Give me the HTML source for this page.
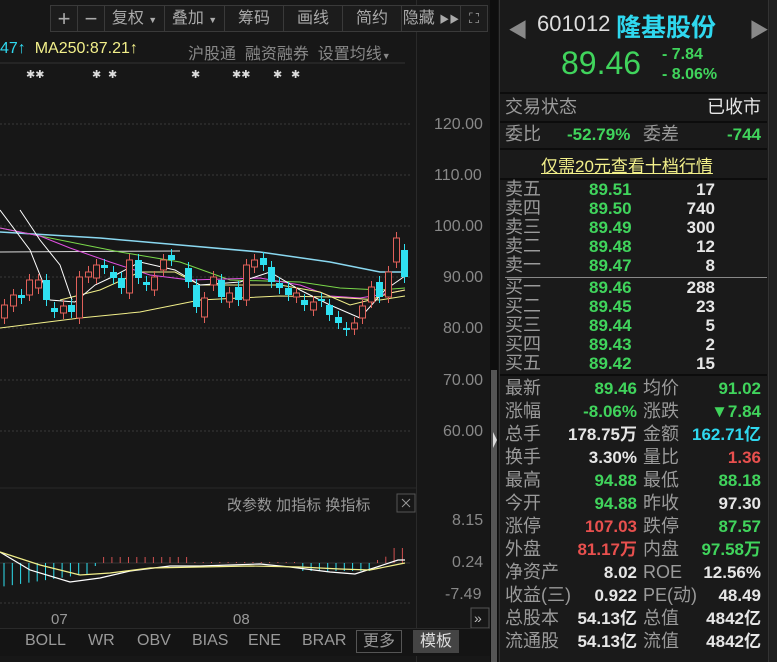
<!DOCTYPE html>
<html><head><meta charset="utf-8">
<style>
*{margin:0;padding:0;box-sizing:border-box}
body{width:777px;height:662px;background:#171717;overflow:hidden;position:relative;font-family:"Liberation Sans","Noto Sans CJK SC",sans-serif;color:#bbb}
.a{position:absolute;white-space:nowrap}
.tb{position:absolute;top:5px;height:27px;border:1px solid #3a3a3a;background:#1c1c1c;color:#aaa;font-size:16px;line-height:25px;text-align:center}
.g{color:#40d45c}.r{color:#e8504e}.w{color:#e6e6e6}.c{color:#2fd8ef}.y{color:#f2ef8a}
.lbl{color:#9a9a9a;font-size:18px}
.row{position:absolute;left:505px;width:260px;height:23px;font-size:17px;line-height:23px}
.row span{position:absolute}
.ob{position:absolute;left:505px;width:210px;height:19px;font-size:17px;line-height:19px;font-weight:bold}
.ob span{position:absolute}
.ax{position:absolute;font-size:16px;color:#888}
</style></head><body>
<svg class="a" style="left:0;top:0" width="500" height="662">
<rect x="416" y="0" width="1" height="662" fill="#2a2a2a"/>
<rect x="490" y="0" width="8" height="662" fill="#0e0e0e"/>
<rect x="491" y="370" width="6" height="292" fill="#555"/>
<polygon points="493,432 497,440 493,448" fill="#ddd"/>
<g stroke="#3a3a3a" stroke-dasharray="2,2" stroke-width="1">
<line x1="0" y1="124" x2="410" y2="124"/><line x1="0" y1="175" x2="410" y2="175"/><line x1="0" y1="226" x2="410" y2="226"/><line x1="0" y1="277" x2="410" y2="277"/><line x1="0" y1="328" x2="410" y2="328"/><line x1="0" y1="380" x2="410" y2="380"/><line x1="0" y1="431" x2="410" y2="431"/>
<line x1="0" y1="603" x2="410" y2="603"/>
</g>
<line x1="0" y1="488" x2="416" y2="488" stroke="#2a2a2a"/>
<line x1="0" y1="63" x2="405" y2="63" stroke="#333"/>
<polyline fill="none" stroke="#8ad8f0" stroke-width="1.5" points="0,232 100,238 180,245 260,252 330,262 380,272 405,272"/>
<polyline fill="none" stroke="#dcdcdc" stroke-width="1" points="0,252 180,251"/>
<polyline fill="none" stroke="#7ad84a" stroke-width="1" points="0,228 60,240 120,252 180,262 230,280 300,282 340,288 380,290 405,288"/>
<polyline fill="none" stroke="#e050e0" stroke-width="1" points="0,228 40,236 70,248 110,262 150,275 190,280 260,278 300,285 330,296 360,298 390,293 405,290"/>
<polyline fill="none" stroke="#f2ef8a" stroke-width="1" points="0,328 80,318 140,312 200,300 280,296 330,297 380,300 405,296"/>
<polyline fill="none" stroke="#f2ef8a" stroke-width="1" points="60,300 100,290 140,272 175,272 200,285 240,285 280,285 320,292 350,305 370,300 390,293 405,290"/>
<polyline fill="none" stroke="#fff" stroke-width="1" points="0,210 30,250 50,300 75,302 95,285 110,278 140,262 175,270 200,285 240,282 270,272 300,290 330,305 360,318 385,290 405,276"/>
<polyline fill="none" stroke="#fff" stroke-width="1" points="20,210 40,240 60,265 72,300"/>
<g id="cd"></g>
<line x1="0" y1="563" x2="410" y2="563" stroke="#333"/>
<g id="md"></g>
<polyline fill="none" stroke="#fff" stroke-width="1.2" points="0,552 30,570 70,582 100,578 130,571 170,566 200,566 230,565 260,564 290,567 330,572 355,574 380,566 398,560 405,560"/>
<polyline fill="none" stroke="#f2ef8a" stroke-width="1.2" points="0,552 40,565 80,575 110,573 150,568 200,567 250,566 300,567 340,569 370,570 395,565 405,563"/>
<rect x="471" y="608" width="18" height="20" fill="none" stroke="#555"/>
<text x="474" y="623" fill="#bbb" font-size="14">»</text>
<rect x="397" y="494" width="18" height="18" fill="none" stroke="#555"/>
<path d="M402 499 L410 507 M410 499 L402 507" stroke="#999"/>
<g fill="#ddd" font-size="11"><text x="26" y="78">✱✱</text><text x="92" y="78">✱</text><text x="108" y="78">✱</text><text x="191" y="78">✱</text><text x="232" y="78">✱✱</text><text x="273" y="78">✱</text><text x="291" y="78">✱</text></g>
</svg>
<div class="ax" style="left:434px;top:116px">120.00</div>
<div class="ax" style="left:434px;top:167px">110.00</div>
<div class="ax" style="left:434px;top:218px">100.00</div>
<div class="ax" style="left:443px;top:269px">90.00</div>
<div class="ax" style="left:443px;top:320px">80.00</div>
<div class="ax" style="left:443px;top:372px">70.00</div>
<div class="ax" style="left:443px;top:423px">60.00</div>
<div class="ax" style="left:452px;top:512px">8.15</div>
<div class="ax" style="left:452px;top:554px">0.24</div>
<div class="ax" style="left:445px;top:586px">-7.49</div>
<div class="a" style="left:227px;top:494px;font-size:15px;color:#999">改参数&nbsp;加指标&nbsp;换指标</div>
<div class="a" style="left:51px;top:611px;font-size:15px;color:#999">07</div>
<div class="a" style="left:233px;top:611px;font-size:15px;color:#999">08</div>
<div class="tb" style="left:50px;width:28px;font-size:22px">+</div>
<div class="tb" style="left:77px;width:28px;font-size:22px">−</div>
<div class="tb" style="left:104px;width:61px">复权 <span style="font-size:9px">▼</span></div>
<div class="tb" style="left:164px;width:61px">叠加 <span style="font-size:9px">▼</span></div>
<div class="tb" style="left:224px;width:60px">筹码</div>
<div class="tb" style="left:283px;width:60px">画线</div>
<div class="tb" style="left:342px;width:60px">简约</div>
<div class="tb" style="left:401px;width:60px">隐藏 <span style="font-size:10px">▶▶</span></div>
<div class="tb" style="left:460px;width:28px;font-size:14px">⛶</div>
<div class="a" style="left:0;top:40px;font-size:16px"><span class="c">47↑</span>&nbsp;&nbsp;<span class="y">MA250:87.21↑</span></div>
<div class="a" style="left:188px;top:40px;font-size:16px;color:#888">沪股通&nbsp;&nbsp;融资融券&nbsp;&nbsp;设置均线<span style="font-size:9px">▼</span></div>
<div class="a" style="left:0;top:628px;width:490px;height:28px;background:#141414;border-top:1px solid #2a2a2a"></div>
<div class="a" style="left:25px;top:632px;font-size:16px;color:#999">BOLL</div>
<div class="a" style="left:88px;top:632px;font-size:16px;color:#999">WR</div>
<div class="a" style="left:137px;top:632px;font-size:16px;color:#999">OBV</div>
<div class="a" style="left:192px;top:632px;font-size:16px;color:#999">BIAS</div>
<div class="a" style="left:248px;top:632px;font-size:16px;color:#999">ENE</div>
<div class="a" style="left:302px;top:632px;font-size:16px;color:#999">BRAR</div>
<div class="a" style="left:356px;top:630px;width:46px;height:23px;border:1px solid #555;font-size:16px;color:#999;text-align:center;line-height:21px">更多</div>
<div class="a" style="left:413px;top:630px;width:46px;height:23px;background:#444;font-size:16px;color:#ddd;text-align:center;line-height:23px">模板</div>
<div class="a" style="left:499px;top:0;width:269px;height:662px;background:#1a1a1a;border-left:1px solid #333"></div>
<div class="a" style="left:768px;top:0;width:9px;height:662px;background:#202020;border-left:1px solid #333"></div>
<div class="a" style="left:508px;top:14px;font-size:20px;color:#888">◀</div>
<div class="a" style="left:749px;top:14px;font-size:20px;color:#888">▶</div>
<div class="a" style="left:537px;top:11px;font-size:22px;color:#ddd">601012</div>
<div class="a c" style="left:616px;top:8px;font-size:25px;font-weight:bold">隆基股份</div>
<div class="a g" style="left:561px;top:45px;font-size:32px">89.46</div>
<div class="a g" style="left:662px;top:46px;font-size:16px;font-weight:bold">- 7.84</div>
<div class="a g" style="left:662px;top:66px;font-size:16px;font-weight:bold">- 8.06%</div>
<div class="a" style="left:500px;top:92px;width:267px;border-top:2px solid #0c0c0c"></div>
<div class="row" style="top:96px"><span class="lbl" style="left:0">交易状态</span><span class="w" style="right:4px;font-size:18px">已收市</span></div>
<div class="a" style="left:500px;top:121px;width:267px;border-top:2px solid #0c0c0c"></div>
<div class="row" style="top:123px"><span class="lbl" style="left:0">委比</span><span class="g" style="left:62px;font-weight:bold">-52.79%</span><span class="lbl" style="left:138px">委差</span><span class="g" style="right:4px;font-weight:bold">-744</span></div>
<div class="a" style="left:500px;top:148px;width:267px;border-top:2px solid #0c0c0c"></div>
<div class="a y" style="left:541px;top:152px;font-size:17px;text-decoration:underline">仅需20元查看十档行情</div>
<div class="a" style="left:500px;top:178px;width:267px;border-top:2px solid #0c0c0c"></div>
<div id="obk"></div>
<div class="a" style="left:505px;top:277px;width:262px;border-top:1px solid #888"></div>
<div class="a" style="left:500px;top:374px;width:267px;border-top:2px solid #0c0c0c"></div>
<div id="st"></div>
<script>
var ob=[["卖五","89.51","17",180],["卖四","89.50","740",199],["卖三","89.49","300",218],["卖二","89.48","12",237],["卖一","89.47","8",256],["买一","89.46","288",278],["买二","89.45","23",297],["买三","89.44","5",316],["买四","89.43","2",335],["买五","89.42","15",354]];
var o="";ob.forEach(function(r){o+='<div class="ob" style="top:'+r[3]+'px"><span class="lbl" style="left:0;font-weight:normal">'+r[0]+'</span><span class="g" style="left:84px">'+r[1]+'</span><span class="w" style="right:0">'+r[2]+'</span></div>';});
document.getElementById("obk").innerHTML=o;
var rows=[["最新","89.46","g","均价","91.02","g"],["涨幅","-8.06%","g","涨跌","▼7.84","g"],["总手","178.75万","w","金额","162.71亿","c"],["换手","3.30%","w","量比","1.36","r"],["最高","94.88","g","最低","88.18","g"],["今开","94.88","g","昨收","97.30","w"],["涨停","107.03","r","跌停","87.57","g"],["外盘","81.17万","r","内盘","97.58万","g"],["净资产","8.02","w","ROE","12.56%","w"],["收益(三)","0.922","w","PE(动)","48.49","w"],["总股本","54.13亿","w","总值","4842亿","w"],["流通股","54.13亿","w","流值","4842亿","w"]];
var h="";rows.forEach(function(r,i){h+='<div class="row" style="top:'+(377+i*23)+'px"><span class="lbl" style="left:0">'+r[0]+'</span><span class="'+r[2]+'" style="right:128px;font-weight:bold">'+r[1]+'</span><span class="lbl" style="left:138px">'+r[3]+'</span><span class="'+r[5]+'" style="right:4px;font-weight:bold">'+r[4]+'</span></div>';});
document.getElementById("st").innerHTML=h;
var c=[[4,305,318,1],[13,295,306,1],[21,295,298,0],[29,280,295,1],[38,280,288,1],[46,280,300,0],[54,308,312,0],[63,306,313,1],[71,305,312,0],[79,277,318,1],[88,272,277,1],[96,265,278,1],[104,265,268,0],[113,272,278,0],[121,278,288,0],[129,260,293,1],[138,260,278,0],[146,282,285,0],[154,277,290,1],[163,260,270,1],[171,255,260,0],[188,268,282,0],[196,285,307,0],[204,298,317,1],[213,277,285,1],[221,280,297,0],[229,293,302,1],[238,287,300,0],[246,265,300,1],[254,260,267,1],[263,258,265,0],[271,267,282,0],[279,283,288,0],[288,288,295,0],[296,293,297,1],[304,300,305,0],[313,302,310,1],[321,299,301,0],[329,305,315,0],[338,317,323,0],[346,328,330,0],[354,323,329,1],[362,306,318,1],[371,287,302,1],[379,282,297,0],[388,272,297,1],[396,238,262,1],[404,250,277,0]];
var s="";c.forEach(function(d){var col=d[3]?"#e0605a":"#2fe0f0";s+='<line x1="'+(d[0]+.5)+'" y1="'+(d[1]-6)+'" x2="'+(d[0]+.5)+'" y2="'+(d[2]+6)+'" stroke="'+col+'"/>';if(d[3])s+='<rect x="'+(d[0]-2.5)+'" y="'+d[1]+'" width="6" height="'+Math.max(1,d[2]-d[1])+'" fill="#171717" stroke="'+col+'"/>';else s+='<rect x="'+(d[0]-3)+'" y="'+d[1]+'" width="7" height="'+Math.max(2,d[2]-d[1])+'" fill="'+col+'"/>';});
document.getElementById("cd").innerHTML=s;
var m="";for(var x=4;x<406;x+=8.3){var v;if(x<90)v=24-x*0.15;else if(x<100)v=3;else if(x<190)v=-6;else if(x<300)v=-1;else if(x<370)v=8;else v=-(x-370)*0.4;if(x>390)v=-15;var col=v>0?"#2fe0f0":"#d05050";m+='<line x1="'+x+'" y1="563" x2="'+x+'" y2="'+(563+v)+'" stroke="'+col+'"/>';}
document.getElementById("md").innerHTML=m;
</script>
</body></html>
